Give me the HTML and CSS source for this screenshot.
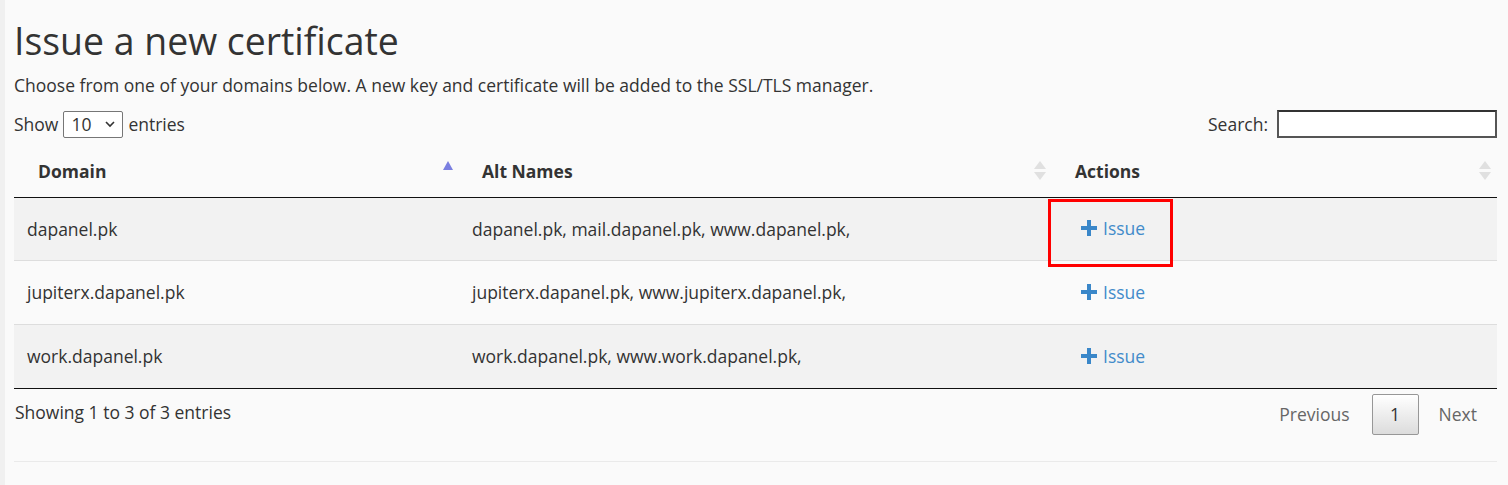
FILE: index.html
```html
<!DOCTYPE html>
<html>
<head>
<meta charset="utf-8">
<link rel="stylesheet" href="styles.css">
</head>
<body>
<div class="page">
  <h1 class="title">Issue a new certificate</h1>
  <p class="desc">Choose from one of your domains below. A new key and certificate will be added to the SSL/TLS manager.</p>
  <div class="toolbar">
    <label class="length">Show
      <span class="select"><span class="select-val">10</span><svg class="chev" width="12" height="8" viewBox="0 0 12 8"><path d="M2 2 L6 6 L10 2" fill="none" stroke="#333" stroke-width="1.6"/></svg></span>
      entries</label>
    <label class="search">Search: <span class="search-input"></span></label>
  </div>
  <table class="grid">
    <thead>
      <tr>
        <th class="c1"><span class="hd">Domain</span><span class="sort asc"><svg width="10" height="9" viewBox="0 0 10 9"><path d="M5 0 L10 9 L0 9 Z" fill="#7a7fe0"/></svg></span></th>
        <th class="c2"><span class="hd">Alt Names</span><span class="sort"><svg width="12" height="19" viewBox="0 0 12 19"><path d="M6 0 L12 8 L0 8 Z M6 19 L12 11 L0 11 Z" fill="#e0e0e0"/></svg></span></th>
        <th class="c3"><span class="hd">Actions</span><span class="sort"><svg width="12" height="19" viewBox="0 0 12 19"><path d="M6 0 L12 8 L0 8 Z M6 19 L12 11 L0 11 Z" fill="#e0e0e0"/></svg></span></th>
      </tr>
    </thead>
    <tbody>
      <tr class="odd">
        <td>dapanel.pk</td>
        <td>dapanel.pk, mail.dapanel.pk, www.dapanel.pk,</td>
        <td class="act"><a class="issue" href="#"><svg class="plus" width="16" height="16" viewBox="0 0 16 16"><path d="M6 0 H10 V6 H16 V10 H10 V16 H6 V10 H0 V6 H6 Z" fill="#3a87c9"/></svg>Issue</a><span class="highlight"></span></td>
      </tr>
      <tr class="even">
        <td>jupiterx.dapanel.pk</td>
        <td>jupiterx.dapanel.pk, www.jupiterx.dapanel.pk,</td>
        <td class="act"><a class="issue" href="#"><svg class="plus" width="16" height="16" viewBox="0 0 16 16"><path d="M6 0 H10 V6 H16 V10 H10 V16 H6 V10 H0 V6 H6 Z" fill="#3a87c9"/></svg>Issue</a></td>
      </tr>
      <tr class="odd">
        <td>work.dapanel.pk</td>
        <td>work.dapanel.pk, www.work.dapanel.pk,</td>
        <td class="act"><a class="issue" href="#"><svg class="plus" width="16" height="16" viewBox="0 0 16 16"><path d="M6 0 H10 V6 H16 V10 H10 V16 H6 V10 H0 V6 H6 Z" fill="#3a87c9"/></svg>Issue</a></td>
      </tr>
    </tbody>
  </table>
  <div class="footer">
    <div class="info">Showing 1 to 3 of 3 entries</div>
    <div class="pager">
      <span class="pg prev">Previous</span>
      <span class="pg current">1</span>
      <span class="pg next">Next</span>
    </div>
  </div>
  <div class="rule"></div>
</div>
</body>
</html>
```

FILE: styles.css
```css
html, body {
  margin: 0;
  padding: 0;
  background: #fafafa;
}
body {
  font-family: "Open Sans", "Liberation Sans", sans-serif;
  color: #333;
  font-size: 17.5px;
  border-left: 5px solid #f0f0f0;
  min-height: 100vh;
  box-sizing: border-box;
}
.page {
  padding: 0 11px 0 9px;
}
.title {
  font-size: 37.4px;
  font-weight: 400;
  line-height: 41px;
  margin: 20px 0 0 0;
  color: #333;
}
.desc {
  margin: 12px 0 0 0;
  line-height: 24px;
}
.toolbar {
  display: flex;
  justify-content: space-between;
  align-items: center;
  margin-top: 13px;
  height: 28px;
}
.length {
  display: flex;
  align-items: center;
  gap: 5px;
}
.select {
  display: inline-flex;
  align-items: center;
  justify-content: space-between;
  width: 60px;
  height: 27px;
  box-sizing: border-box;
  border: 1px solid #767676;
  border-radius: 2px;
  background: #fff;
  padding: 0 6px 0 7px;
}
.search {
  display: flex;
  align-items: center;
  gap: 9px;
}
.search-input {
  display: inline-block;
  width: 220px;
  height: 28px;
  box-sizing: border-box;
  border: 2px solid #555;
  border-top-color: #333;
  background: #fff;
}
.grid {
  width: 100%;
  border-collapse: collapse;
  margin-top: 12px;
  table-layout: fixed;
}
.grid th {
  text-align: left;
  font-weight: 700;
  height: 47px;
  padding: 0 10px 5px 24px;
  border-bottom: 1px solid #111;
  position: relative;
  box-sizing: border-box;
}
.grid th.c1 { width: 445px; }
.grid th.c2 { width: 593px; padding-left: 23px; }
.grid th.c3 { padding-left: 23px; }
.sort {
  position: absolute;
  right: 6px;
  top: 11px;
  line-height: 0;
}
.sort.asc {
  right: 6px;
  top: 11px;
}
.grid td {
  height: 64px;
  padding: 0 13px;
  border-top: 1px solid #ddd;
  box-sizing: border-box;
}
.grid tbody tr:first-child td { border-top: none; height: 63px; }
.grid tbody tr:last-child td { border-bottom: 1px solid #111; height: 64px; }
.grid tr.odd td { background: #f2f2f2; }
.grid tr.even td { background: #fafafa; }
.grid td.act { position: relative; padding-left: 29px; }
.issue {
  color: #428bca;
  text-decoration: none;
  display: inline-flex;
  align-items: center;
  gap: 6px;
}
.highlight {
  position: absolute;
  left: -4px;
  top: 1px;
  width: 125px;
  height: 68px;
  box-sizing: border-box;
  border: 3px solid #f00;
  z-index: 5;
}
.footer {
  display: flex;
  justify-content: space-between;
  align-items: flex-start;
  height: 72px;
  box-sizing: border-box;
}
.info { line-height: 24px; margin: 11px 0 0 1px; }
.pager {
  display: flex;
  align-items: center;
  margin-top: 5px;
}
.pg {
  display: inline-block;
  height: 41px;
  line-height: 39px;
  box-sizing: border-box;
  border: 1px solid transparent;
  border-radius: 2px;
  color: #666;
}
.pg.prev { padding: 0 21px 0 18px; }
.pg.current {
  color: #333;
  border-color: #979797;
  background: linear-gradient(to bottom, #fff 0%, #dcdcdc 100%);
  padding: 0 17.5px;
}
.pg.next { padding: 0 19px 0 19px; }
.rule {
  border-top: 1px solid #eaeaea;
}
```
